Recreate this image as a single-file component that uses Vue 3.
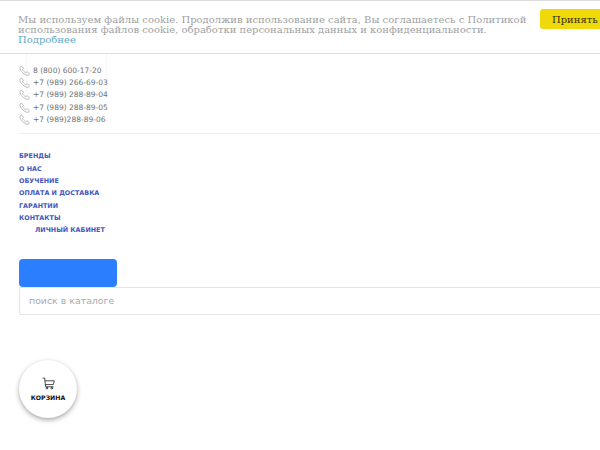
<script setup>
const phones = [
  '8 (800) 600-17-20',
  '+7 (989) 266-69-03',
  '+7 (989) 288-89-04',
  '+7 (989) 288-89-05',
  '+7 (989)288-89-06',
]
const links = ['БРЕНДЫ', 'О НАС', 'ОБУЧЕНИЕ', 'ОПЛАТА И ДОСТАВКА', 'ГАРАНТИИ', 'КОНТАКТЫ']
</script>

<template>
  <div class="page">
    <div class="cookie">
      <p class="cookie-text">
        Мы используем файлы cookie. Продолжив использование сайта, Вы соглашаетесь с Политикой
        использования файлов cookie, обработки персональных данных и конфиденциальности.
        <a class="cookie-more">Подробнее</a>
      </p>
      <button class="cookie-btn">Принять</button>
    </div>

    <div class="ghost-card"></div>

    <ul class="phones">
      <li v-for="phone in phones" :key="phone" class="phone">
        <svg class="phone-icon" viewBox="0 0 24 24" fill="none" stroke="#a0a0a0" stroke-width="1.500" stroke-linejoin="round">
          <path d="M5.500 2 2 5c-.5 4 2.500 8.500 6 12s8.500 6 12.500 5.500L23 19l-5.500-4.500-3 2.500c-2-.8-6-5-7-7.500L10 7.500z" />
        </svg>
        <span>{{ phone }}</span>
      </li>
    </ul>

    <div class="divider"></div>

    <nav class="nav">
      <a v-for="link in links" :key="link" class="nav-link">{{ link }}</a>
      <a class="nav-link nav-cabinet">ЛИЧНЫЙ КАБИНЕТ</a>
    </nav>

    <div class="blue-btn"></div>
    <div class="search">поиск в каталоге</div>

    <div class="cart">
      <svg class="cart-icon" viewBox="0 0 24 24" fill="none" stroke="#222" stroke-width="1.500" stroke-linejoin="round" stroke-linecap="round">
        <path d="M2 2h3l1.500 16h14" />
        <path d="M5.800 7h16.700l-1.500 7H6.500" />
        <circle cx="9" cy="20.500" r="1.500" />
        <circle cx="18" cy="20.500" r="1.500" />
      </svg>
      <span class="cart-label">КОРЗИНА</span>
    </div>
  </div>
</template>

<style scoped>
.page {
  position: relative;
  width: 600px;
  height: 450px;
  overflow: hidden;
  background: #fff;
  padding: 64px 0 0 19px;
  box-sizing: border-box;
  font-family: "DejaVu Sans", sans-serif;
}

.cookie {
  position: absolute;
  top: 0;
  left: 0;
  width: 600px;
  height: 54px;
  box-sizing: border-box;
  border-top: 1px solid #ddd;
  border-bottom: 1px solid #ddd;
  background: #fff;
  z-index: 2;
}

.cookie-text {
  margin: 0;
  padding: 14px 0 0 18px;
  width: 515px;
  font-family: "DejaVu Serif", serif;
  font-size: 10px;
  line-height: 10px;
  color: #a0a0a0;
}

.cookie-more {
  display: block;
  color: #5fa8c4;
}

.cookie-btn {
  position: absolute;
  top: 8px;
  left: 540px;
  width: 70px;
  height: 20px;
  padding: 0 0 0 12px;
  border: 0;
  border-radius: 3px;
  background: #f0d90a;
  color: #332d0c;
  font-family: "DejaVu Serif", serif;
  font-size: 10px;
  text-align: left;
}

.ghost-card {
  position: absolute;
  top: 50px;
  left: 26px;
  width: 79px;
  height: 42px;
  border: 1px solid #f6f6f6;
  border-radius: 3px;
}

.phones {
  position: relative;
  list-style: none;
  margin: 0;
  padding: 0;
}

.phone {
  display: flex;
  align-items: center;
  gap: 3px;
  height: 12.300px;
  font-size: 7.500px;
  color: #707070;
}

.phone-icon {
  width: 11px;
  height: 11px;
  flex: none;
}

.divider {
  height: 1px;
  margin-top: 8px;
  background: #eee;
}

.nav {
  display: flex;
  flex-direction: column;
  align-items: flex-start;
  margin-top: 16px;
}

.nav-link {
  height: 12.300px;
  line-height: 12.300px;
  font-size: 6.400px;
  font-weight: 700;
  color: #4557c0;
}

.nav-cabinet {
  margin-left: 16px;
}

.blue-btn {
  width: 98px;
  height: 28px;
  margin-top: 22px;
  border-radius: 4px;
  background: #2b7fff;
}

.search {
  height: 28px;
  box-sizing: border-box;
  padding-left: 9px;
  border: 1px solid #e6e6e6;
  border-right: 0;
  border-radius: 2px 0 0 2px;
  font-size: 9.400px;
  line-height: 26px;
  color: #aaa;
}

.cart {
  display: flex;
  flex-direction: column;
  align-items: center;
  justify-content: center;
  gap: 4px;
  width: 58px;
  height: 58px;
  margin-top: 45px;
  border-radius: 50%;
  background: #fff;
  box-shadow: 0 2px 5px rgba(0, 0, 0, 0.35);
}

.cart-icon {
  width: 13px;
  height: 13px;
}

.cart-label {
  font-size: 6.200px;
  font-weight: 700;
  color: #111;
}
</style>
